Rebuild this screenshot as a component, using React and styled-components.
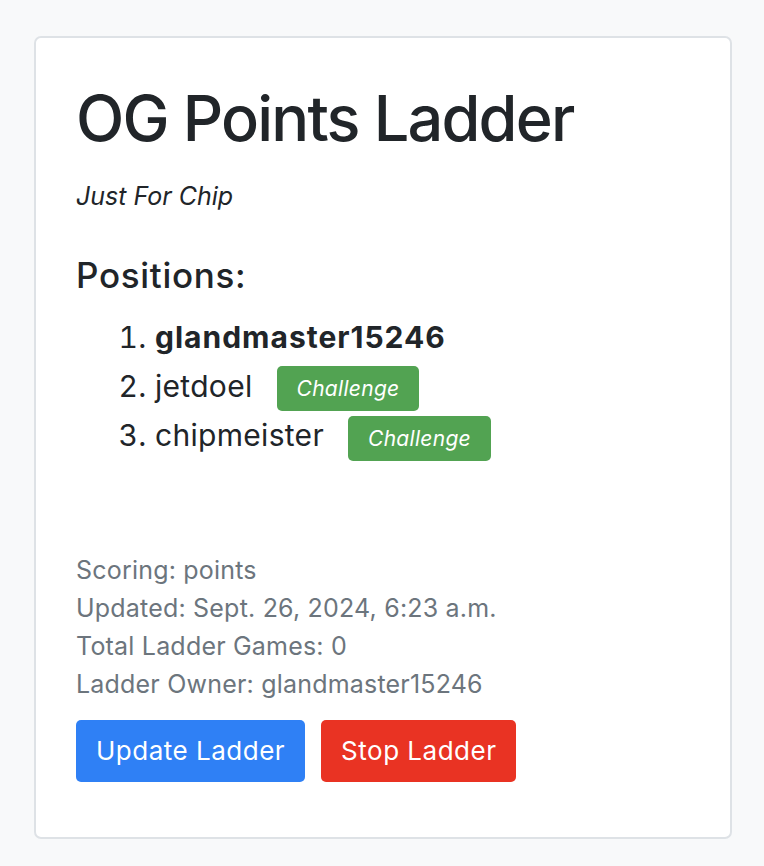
import styled, { createGlobalStyle } from 'styled-components';

const GlobalStyle = createGlobalStyle`
  body {
    margin: 0;
    background-color: #f8f9fa;
    font-family: Inter, "Noto Sans", sans-serif;
    color: #212529;
  }
`;

const Page = styled.div`
  padding: 36px 32px 30px 34px;
`;

const Card = styled.div`
  background-color: white;
  border: 2px solid #dee2e6;
  border-radius: 7px;
  padding: 43px 40px 55px 40px;
`;

const Title = styled.h1`
  margin: 0 0 21px 0;
  font-size: 63px;
  font-weight: 500;
  line-height: 1.2;
  letter-spacing: -1.8px;
`;

const Subtitle = styled.p`
  margin: 0 0 39px 0;
  font-size: 25px;
  font-style: italic;
  line-height: 1.5;
`;

const Heading = styled.h4`
  margin: 0 0 17px 0;
  font-size: 35px;
  font-weight: 500;
  line-height: 1.2;
  letter-spacing: 0.7px;
`;

const List = styled.ol`
  margin: 0 0 90px 0;
  padding-left: 79px;
  font-size: 30px;
  line-height: 49px;
  letter-spacing: 0.3px;
`;

const Name = styled.span`
  font-weight: ${(p) => (p.$leader ? 700 : 400)};
  letter-spacing: ${(p) => (p.$leader ? '1px' : '0.3px')};
`;

const Badge = styled.button`
  margin-left: 24px;
  border: none;
  border-radius: 5px;
  background-color: #52a352;
  color: white;
  font-family: inherit;
  font-size: 21px;
  font-style: italic;
  line-height: 25px;
  padding: 10px 20px;
  vertical-align: middle;
  letter-spacing: 0.3px;
`;

const Meta = styled.div`
  color: #6c757d;
  font-size: 25px;
  line-height: 38px;
  letter-spacing: 0.2px;
`;

const Actions = styled.div`
  display: flex;
  gap: 16px;
  margin-top: 17px;
`;

const Button = styled.button`
  border: none;
  border-radius: 5px;
  background-color: ${(p) => p.$bg};
  color: white;
  font-family: inherit;
  font-size: 26px;
  letter-spacing: 0.5px;
  padding: 0 20px;
  height: 62px;
`;

const players = ['glandmaster15246', 'jetdoel', 'chipmeister'];

export default function App() {
  return (
    <Page>
      <GlobalStyle />
      <Card>
        <Title>OG Points Ladder</Title>
        <Subtitle>Just For Chip</Subtitle>
        <Heading>Positions:</Heading>
        <List>
          {players.map((name, i) => (
            <li key={name}>
              <Name $leader={i === 0}>{name}</Name>
              {i > 0 && <Badge>Challenge</Badge>}
            </li>
          ))}
        </List>
        <Meta>
          <div>Scoring: points</div>
          <div>Updated: Sept. 26, 2024, 6:23 a.m.</div>
          <div>Total Ladder Games: 0</div>
          <div>Ladder Owner: glandmaster15246</div>
        </Meta>
        <Actions>
          <Button $bg="#2f80f5">Update Ladder</Button>
          <Button $bg="#e93323">Stop Ladder</Button>
        </Actions>
      </Card>
    </Page>
  );
}
